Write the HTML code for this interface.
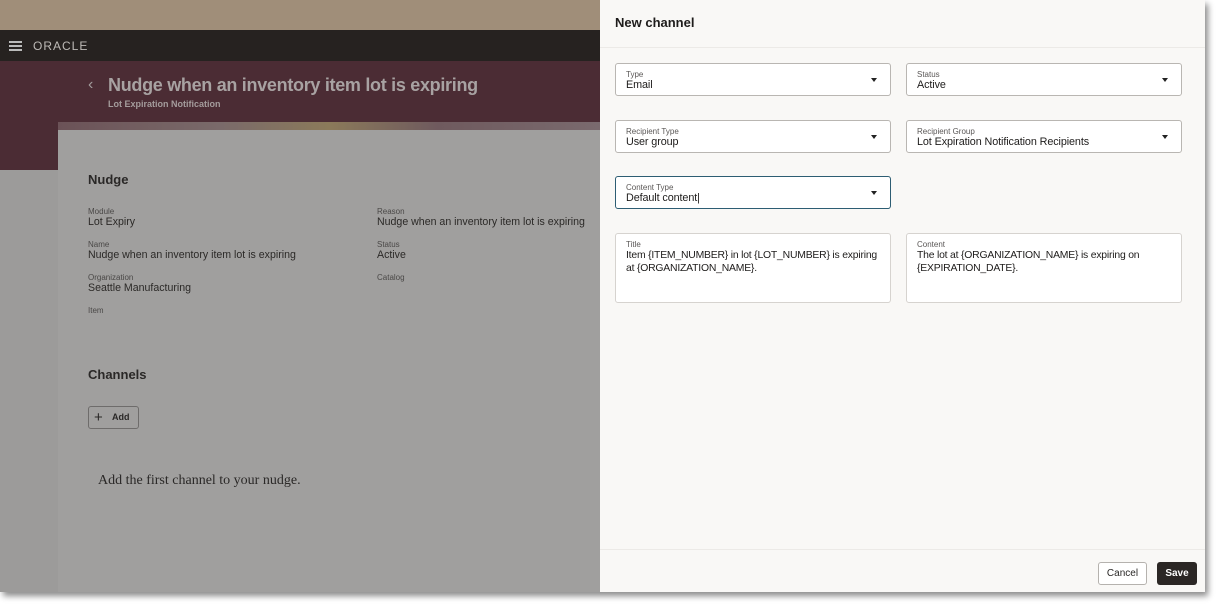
<!DOCTYPE html>
<html><head><meta charset="utf-8"><style>
*{box-sizing:border-box;margin:0;padding:0}
body{width:1218px;height:605px;background:#fff;position:relative;overflow:hidden;font-family:"Liberation Sans",sans-serif}
.abs{position:absolute}
.screen{left:0;top:0;width:1205px;height:592px;box-shadow:3px 4px 6px rgba(0,0,0,.45);overflow:hidden}
.lab{font-size:8px;color:#4a4847}
.val{font-size:10.6px;color:#2b2927}
.f{position:absolute;border:1px solid #b9b6b2;border-radius:3px;background:#fff;height:33px;width:276px}
.f .l{position:absolute;left:10px;top:6px;font-size:8px;color:#5a5756}
.f .v{position:absolute;left:10px;top:15px;font-size:10.8px;color:#1e1c1b;letter-spacing:-0.1px}
.f .c{position:absolute;right:13px;top:14px;width:0;height:0;border-left:3.5px solid transparent;border-right:3.5px solid transparent;border-top:4px solid #222}
</style></head><body>
<div class="abs screen">
 <div class="abs" style="left:0;top:0;width:600px;height:30px;background:#a08e79"></div>
 <div class="abs" style="left:0;top:30px;width:600px;height:31px;background:#262220"></div>
 <div class="abs" style="left:9px;top:41px;width:13px;height:1.5px;background:#bbb;box-shadow:0 4px 0 #bbb,0 8px 0 #bbb"></div>
 <div class="abs" style="left:33px;top:39px;font-size:12px;color:#bdbab6;letter-spacing:1px">ORACLE</div>
 <div class="abs" style="left:0;top:61px;width:600px;height:109px;background:#4b2c34"></div>
 <div class="abs" style="left:0;top:170px;width:58px;height:422px;background:#9c9b9a"></div>
 <div class="abs" style="left:88px;top:76px;font-size:16px;color:#a29c9c">‹</div>
 <div class="abs" style="left:108px;top:75px;font-size:18px;font-weight:bold;color:#a8a2a2;letter-spacing:-0.3px">Nudge when an inventory item lot is expiring</div>
 <div class="abs" style="left:108px;top:99px;font-size:9px;font-weight:bold;color:#a49c9c">Lot Expiration Notification</div>
 <div class="abs" style="left:58px;top:122px;width:542px;height:8px;background:linear-gradient(90deg,#6b5257,#7a6a6a 30%,#8b7a5a 50%,#6f5a5e 70%,#7a6a6e)"></div>
 <div class="abs" style="left:58px;top:130px;width:542px;height:462px;background:#a09f9e"></div>
 <div class="abs" style="left:88px;top:172px;font-size:13px;font-weight:bold;color:#2a2827">Nudge</div>
 <div class="abs lab" style="left:88px;top:207px">Module</div><div class="abs val" style="left:88px;top:216px">Lot Expiry</div>
 <div class="abs lab" style="left:88px;top:240px">Name</div><div class="abs val" style="left:88px;top:249px">Nudge when an inventory item lot is expiring</div>
 <div class="abs lab" style="left:88px;top:273px">Organization</div><div class="abs val" style="left:88px;top:282px">Seattle Manufacturing</div>
 <div class="abs lab" style="left:88px;top:306px">Item</div>
 <div class="abs lab" style="left:377px;top:207px">Reason</div><div class="abs val" style="left:377px;top:216px">Nudge when an inventory item lot is expiring</div>
 <div class="abs lab" style="left:377px;top:240px">Status</div><div class="abs val" style="left:377px;top:249px">Active</div>
 <div class="abs lab" style="left:377px;top:273px">Catalog</div>
 <div class="abs" style="left:88px;top:367px;font-size:13px;font-weight:bold;color:#2a2827">Channels</div>
 <div class="abs" style="left:88px;top:406px;width:51px;height:23px;border:1px solid #6e6c6b;border-radius:3px;font-size:9px;font-weight:bold;color:#2a2827;padding:5px 0 0 23px">Add</div>
 <div class="abs" style="left:94px;top:412px;font-size:15px;line-height:11px;color:#2a2827">+</div>
 <div class="abs" style="left:98px;top:473px;font-family:'Liberation Serif',serif;font-size:14px;color:#2a2827">Add the first channel to your nudge.</div>

 <div class="abs" style="left:600px;top:0;width:605px;height:592px;background:#f9f8f6"></div>
 <div class="abs" style="left:600px;top:47px;width:605px;height:1px;background:#eceae7"></div>
 <div class="abs" style="left:600px;top:549px;width:605px;height:1px;background:#eceae7"></div>
 <div class="abs" style="left:615px;top:15px;font-size:13px;font-weight:bold;color:#1e1c1b">New channel</div>
 <div class="f" style="left:615px;top:63px"><div class="l">Type</div><div class="v">Email</div><div class="c"></div></div>
 <div class="f" style="left:906px;top:63px"><div class="l">Status</div><div class="v">Active</div><div class="c"></div></div>
 <div class="f" style="left:615px;top:120px"><div class="l">Recipient Type</div><div class="v">User group</div><div class="c"></div></div>
 <div class="f" style="left:906px;top:120px"><div class="l">Recipient Group</div><div class="v">Lot Expiration Notification Recipients</div><div class="c"></div></div>
 <div class="f" style="left:615px;top:176px;border-color:#2d5d73;border-width:1.5px"><div class="l">Content Type</div><div class="v">Default content|</div><div class="c"></div></div>
 <div class="f" style="left:615px;top:233px;height:70px;border-color:#d6d3cf"><div class="l">Title</div><div class="v" style="line-height:13px;width:256px;font-size:10.4px;letter-spacing:-0.2px">Item {ITEM_NUMBER} in lot {LOT_NUMBER} is expiring at {ORGANIZATION_NAME}.</div></div>
 <div class="f" style="left:906px;top:233px;height:70px;border-color:#d6d3cf"><div class="l">Content</div><div class="v" style="line-height:13px;width:240px;font-size:10.4px;letter-spacing:-0.2px">The lot at {ORGANIZATION_NAME} is expiring on {EXPIRATION_DATE}.</div></div>
 <div class="abs" style="left:1098px;top:562px;width:49px;height:23px;border:1px solid #b5b2ae;border-radius:3px;background:#fff;font-size:10px;color:#2a2827;text-align:center;line-height:21px">Cancel</div>
 <div class="abs" style="left:1157px;top:562px;width:40px;height:23px;border-radius:3px;background:#2b2725;font-size:10px;font-weight:bold;color:#fff;text-align:center;line-height:23px">Save</div>
</div>
</body></html>
